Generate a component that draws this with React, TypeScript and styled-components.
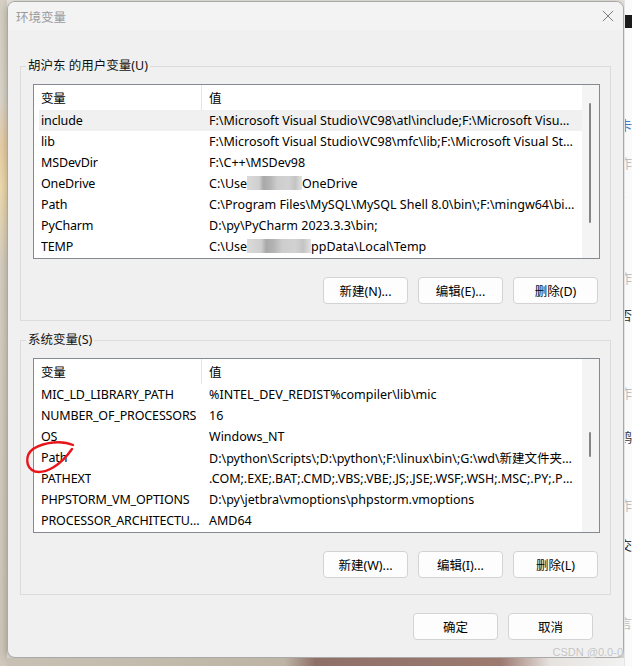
import React from 'react';
import styled, { createGlobalStyle } from 'styled-components';

const GlobalStyle = createGlobalStyle`
  html, body {
    margin: 0;
    padding: 0;
    background: #e9e6df;
  }
  body {
    font-family: "Noto Sans", "Noto Sans CJK SC", sans-serif;
    font-size: 12.5px;
    color: #000;
  }
  * {
    box-sizing: border-box;
  }
`;

interface EnvVar {
  name: string;
  value: React.ReactNode;
}

const Screen = styled.div`
  position: relative;
  width: 632px;
  height: 666px;
  overflow: hidden;
  display: grid;
  grid-template-columns: 7px 617px 8px;
  grid-template-rows: 658px 8px;
`;

const LeftPeek = styled.div`
  grid-row: 1 / 3;
  grid-column: 1;
  background: linear-gradient(
    180deg,
    #d6d0c4 0%,
    #dcd6ca 15%,
    #e9cfa6 22%,
    #efdcae 28%,
    #d7cfc1 40%,
    #cfc8bb 100%
  );
`;

const RightPeek = styled.div`
  grid-row: 1 / 3;
  grid-column: 3;
  display: flex;
  flex-direction: column;
  background: #fafafa;
  border-left: 1px solid #e4e4e4;
  font-family: "Noto Sans CJK SC", sans-serif;
  font-size: 13px;
  overflow: hidden;
`;

const DarkStrip = styled.div`
  height: 13px;
  margin-top: 15px;
  background: #1b1b1b;
`;

const Peek = styled.span<{ $gap: number; $color?: string }>`
  margin-top: ${({ $gap }) => $gap}px;
  margin-left: -6px;
  line-height: 14px;
  color: ${({ $color }) => $color || '#bdbdbd'};
  white-space: nowrap;
`;

const BottomPeek = styled.div`
  grid-row: 2;
  grid-column: 2;
  background: linear-gradient(
    90deg,
    #c8c1b3 0%,
    #bdb4a5 45%,
    #8f7067 50%,
    #9c7a70 80%,
    #e6e2de 88%,
    #f2f2f2 100%
  );
`;

const Dialog = styled.div`
  grid-row: 1;
  grid-column: 2;
  display: flex;
  flex-direction: column;
  margin-top: 1px;
  background: #f0f0f0;
  border: 1px solid #a9a9a9;
  border-radius: 8px;
  box-shadow: 0 2px 10px rgba(0, 0, 0, 0.28);
  overflow: hidden;
`;

const TitleBar = styled.div`
  display: flex;
  align-items: center;
  justify-content: space-between;
  height: 28px;
  padding: 0 9px 0 8px;
  background: #f3f3f3;
`;

const Title = styled.span`
  color: #9a9a9a;
  font-size: 12.5px;
`;

const Body = styled.div`
  display: flex;
  flex-direction: column;
  gap: 10px;
  padding: 27px 12px 0 12px;
`;

const Group = styled.fieldset`
  margin: 0;
  min-width: 0;
  padding: 9px 10px 16px 12px;
  border: 1px solid #dcdcdc;
`;

const Legend = styled.legend`
  margin-left: -7px;
  padding: 0 2px;
  line-height: 18px;
  color: #111;
`;

const List = styled.div`
  display: flex;
  height: 175px;
  background: #fff;
  border: 1px solid #858a92;
`;

const Columns = styled.div`
  flex: 1;
  min-width: 0;
  padding-left: 5px;
`;

const Line = styled.div<{ $head?: boolean; $selected?: boolean }>`
  display: grid;
  grid-template-columns: 163px 1fr;
  height: ${({ $head }) => ($head ? '25px' : '21px')};
  align-items: center;
  background: ${({ $selected }) => ($selected ? '#f0f0f0' : 'transparent')};
`;

const NameCell = styled.div<{ $head?: boolean }>`
  height: 100%;
  display: flex;
  align-items: center;
  padding: 0 0 0 2px;
  overflow: hidden;
  white-space: nowrap;
  border-right: ${({ $head }) => ($head ? '1px solid #e5e5e5' : 'none')};

  span {
    overflow: hidden;
    text-overflow: ellipsis;
    letter-spacing: -0.15px;
  }
`;

const ValueCell = styled.div`
  padding: 0 6px 0 7px;
  overflow: hidden;
  white-space: nowrap;
  text-overflow: ellipsis;
`;

const ScrollTrack = styled.div`
  width: 17px;
  flex: none;
  background: #f4f4f4;
  padding-left: 7px;
`;

const Thumb = styled.div<{ $offset: number; $length: number }>`
  width: 2px;
  margin-top: ${({ $offset }) => $offset}px;
  height: ${({ $length }) => $length}px;
  background: #868686;
  border-radius: 1px;
`;

const Mosaic = styled.span<{ $width: number }>`
  display: inline-block;
  width: ${({ $width }) => $width}px;
  height: 14px;
  vertical-align: -2px;
  background: linear-gradient(
    90deg,
    #dadada 0%,
    #cfcfcf 22%,
    #a9a9a9 30%,
    #b4b4b4 42%,
    #cdcdcd 55%,
    #d2d2d2 75%,
    #c4c4c4 88%,
    #e2e2e2 100%
  );
  filter: blur(0.6px);
`;

const ButtonRow = styled.div`
  display: flex;
  justify-content: flex-end;
  gap: 10px;
  margin-top: 18px;
  padding-right: 2px;
`;

const Button = styled.button`
  width: 85px;
  height: 27px;
  padding: 0;
  background: #fdfdfd;
  border: 1px solid #d3d3d3;
  border-radius: 4px;
  font-family: inherit;
  font-size: 12.5px;
  color: #000;
`;

const Footer = styled.div`
  display: flex;
  justify-content: flex-end;
  gap: 10px;
  margin-top: 18px;
  padding-right: 30px;
`;

const Watermark = styled.div`
  position: absolute;
  right: 9px;
  bottom: 8px;
  font-family: "Liberation Sans", sans-serif;
  font-size: 11px;
  color: #c2c2c2;
  text-shadow: 0 0 1px #fff;
`;

const Scribble = styled.svg`
  position: absolute;
  left: 0;
  top: 0;
  pointer-events: none;
`;

const userVars: EnvVar[] = [
  { name: 'include', value: 'F:\\Microsoft Visual Studio\\VC98\\atl\\include;F:\\Microsoft Visual Studio\\VC98\\mfc\\include' },
  { name: 'lib', value: 'F:\\Microsoft Visual Studio\\VC98\\mfc\\lib;F:\\Microsoft Visual Studio\\VC98\\lib' },
  { name: 'MSDevDir', value: 'F:\\C++\\MSDev98' },
  {
    name: 'OneDrive',
    value: (
      <>
        C:\Use<Mosaic $width={55} />OneDrive
      </>
    ),
  },
  { name: 'Path', value: 'C:\\Program Files\\MySQL\\MySQL Shell 8.0\\bin\\;F:\\mingw64\\bin;C:\\Users' },
  { name: 'PyCharm', value: 'D:\\py\\PyCharm 2023.3.3\\bin;' },
  {
    name: 'TEMP',
    value: (
      <>
        C:\Use<Mosaic $width={64} />ppData\Local\Temp
      </>
    ),
  },
];

const systemVars: EnvVar[] = [
  { name: 'MIC_LD_LIBRARY_PATH', value: '%INTEL_DEV_REDIST%compiler\\lib\\mic' },
  { name: 'NUMBER_OF_PROCESSORS', value: '16' },
  { name: 'OS', value: 'Windows_NT' },
  { name: 'Path', value: 'D:\\python\\Scripts\\;D:\\python\\;F:\\linux\\bin\\;G:\\wd\\新建文件夹\\bin\\;C:\\Windows' },
  { name: 'PATHEXT', value: '.COM;.EXE;.BAT;.CMD;.VBS;.VBE;.JS;.JSE;.WSF;.WSH;.MSC;.PY;.PYW' },
  { name: 'PHPSTORM_VM_OPTIONS', value: 'D:\\py\\jetbra\\vmoptions\\phpstorm.vmoptions' },
  { name: 'PROCESSOR_ARCHITECTURE', value: 'AMD64' },
];

const VarList: React.FC<{
  vars: EnvVar[];
  selected?: number;
  thumbOffset: number;
  thumbLength: number;
}> = ({ vars, selected, thumbOffset, thumbLength }) => (
  <List>
    <Columns>
      <Line $head>
        <NameCell $head>
          <span>变量</span>
        </NameCell>
        <ValueCell>值</ValueCell>
      </Line>
      {vars.map((v, i) => (
        <Line key={v.name} $selected={i === selected}>
          <NameCell>
            <span>{v.name}</span>
          </NameCell>
          <ValueCell>{v.value}</ValueCell>
        </Line>
      ))}
    </Columns>
    <ScrollTrack>
      <Thumb $offset={thumbOffset} $length={thumbLength} />
    </ScrollTrack>
  </List>
);

const CloseIcon = () => (
  <svg width="12" height="12" viewBox="0 0 12 12">
    <path d="M1 1 L11 11 M11 1 L1 11" stroke="#7c7c7c" strokeWidth="1" fill="none" />
  </svg>
);

export default function App() {
  return (
    <>
      <GlobalStyle />
      <Screen>
        <LeftPeek />
        <Dialog>
          <TitleBar>
            <Title>环境变量</Title>
            <CloseIcon />
          </TitleBar>
          <Body>
            <Group>
              <Legend>胡沪东 的用户变量(U)</Legend>
              <VarList vars={userVars} selected={0} thumbOffset={18} thumbLength={120} />
              <ButtonRow>
                <Button>新建(N)...</Button>
                <Button>编辑(E)...</Button>
                <Button>删除(D)</Button>
              </ButtonRow>
            </Group>
            <Group>
              <Legend>系统变量(S)</Legend>
              <VarList vars={systemVars} thumbOffset={73} thumbLength={25} />
              <ButtonRow>
                <Button>新建(W)...</Button>
                <Button>编辑(I)...</Button>
                <Button>删除(L)</Button>
              </ButtonRow>
            </Group>
          </Body>
          <Footer>
            <Button>确定</Button>
            <Button>取消</Button>
          </Footer>
        </Dialog>
        <RightPeek>
          <DarkStrip />
          <Peek $gap={90} $color="#4a78c0">卡</Peek>
          <Peek $gap={24}>作</Peek>
          <Peek $gap={16} $color="#333">z</Peek>
          <Peek $gap={71}>作</Peek>
          <Peek $gap={23} $color="#333">否</Peek>
          <Peek $gap={64}>作</Peek>
          <Peek $gap={30} $color="#333">鸥</Peek>
          <Peek $gap={54}>作</Peek>
          <Peek $gap={26} $color="#333">交</Peek>
          <Peek $gap={64}>言</Peek>
        </RightPeek>
        <BottomPeek />
        <Watermark>CSDN @0.0-0</Watermark>
        <Scribble width="632" height="666" viewBox="0 0 632 666">
          <path
            d="M73 445 C62 440, 44 442, 33 449 C25 455, 25 468, 35 471.5 C46 474, 61 465, 72 449"
            stroke="#e8161c"
            strokeWidth="2.4"
            fill="none"
            strokeLinecap="round"
          />
        </Scribble>
      </Screen>
    </>
  );
}
